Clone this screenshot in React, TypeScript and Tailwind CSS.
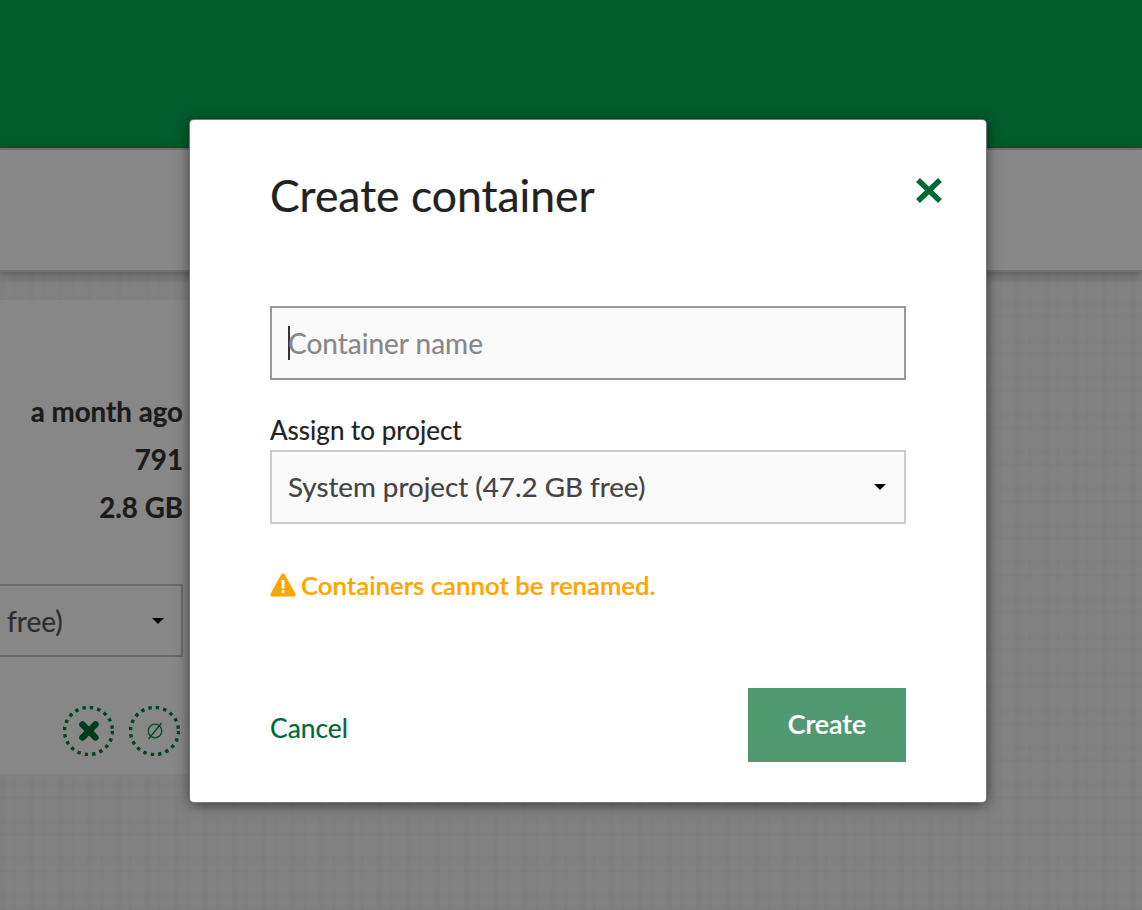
import { X } from "lucide-react";

function Dotted({ children }: { children: React.ReactNode }) {
  return (
    <div className="relative flex h-[50px] w-[51px] items-center justify-center">
      <svg width="51" height="50" viewBox="0 0 51 50" className="absolute inset-0" aria-hidden="true">
        <ellipse cx="25.500" cy="25" rx="24" ry="23.500" fill="none" stroke="#008040" strokeWidth="3.400" strokeDasharray="3.400 4.100" />
      </svg>
      {children}
    </div>
  );
}

function Background() {
  return (
    <div className="flex min-h-[910px] flex-col bg-[#f4f4f4] bg-[repeating-linear-gradient(90deg,rgba(0,0,0,0.014)_0_5px,transparent_5px_13px,rgba(0,0,0,0.01)_13px_16px,transparent_16px_29px),repeating-linear-gradient(0deg,rgba(0,0,0,0.014)_0_3px,transparent_3px_11px,rgba(0,0,0,0.01)_11px_17px,transparent_17px_37px)] font-['Lato',sans-serif] text-[#333]">
      <div className="h-[148px] bg-[#00ac55]" />
      <div className="h-[124px] border-y-2 border-[#d2d2d2] bg-white shadow-[0_3px_10px_rgba(0,0,0,0.3)]" />
      <div className="mt-[28px] w-[400px] bg-white pb-[18px] pr-[217px] pt-[88px]">
        <div className="flex flex-col items-end text-[27.700px] leading-[48px] font-bold">
          <span className="whitespace-nowrap">a month ago</span>
          <span>791</span>
          <span>2.8 GB</span>
        </div>
        <div className="ml-[-10px] mt-[52px] flex h-[73px] items-center justify-between border-2 border-[#c8c8c8] pl-[15px] pr-[17px] text-[28px] text-[#555]">
          <span>free)</span>
          <span className="h-0 w-0 border-x-[6px] border-t-[6px] border-x-transparent border-t-black" />
        </div>
        <div className="mt-[49px] flex justify-end gap-[15px] pr-[3px]">
          <Dotted>
            <X size={26} strokeWidth={6} className="text-[#007038]" />
          </Dotted>
          <Dotted>
            <svg width="22" height="18" viewBox="0 0 22 18" fill="none" stroke="#008a45" strokeWidth="1.300" aria-hidden="true">
              <circle cx="11" cy="9" r="6.800" />
              <path d="M4.500 17 17.500 1" />
            </svg>
          </Dotted>
        </div>
      </div>
    </div>
  );
}

export default function App() {
  return (
    <div className="relative h-[910px] w-[1142px] overflow-hidden [-webkit-text-stroke:0.2px]">
      <Background />
      <div className="absolute inset-0 bg-black/[0.47]" />
      <div className="absolute left-[190px] top-[120px] h-[682px] w-[796px] rounded-[4px] bg-white pl-[80px] pr-[80px] pt-[47px] font-['Lato',sans-serif] shadow-[0_0_0_1px_#777,0_2px_14px_rgba(0,0,0,0.6)]">
        <svg width="28" height="27" viewBox="0 0 28 27" className="absolute right-[43px] top-[57px]" aria-hidden="true">
          <path d="M3 3 25 24M25 3 3 24" fill="none" stroke="#006837" strokeWidth="5.500" />
        </svg>
        <h1 className="text-[44.500px] leading-[56px] font-normal text-[#222]">Create container</h1>
        <div className="mt-[83px] flex h-[74px] items-center border-2 border-[#999] bg-[#fafafa] pl-[16px] text-[28px] text-[#888]">
          <span className="mr-[-2px] h-[34px] w-[2px] bg-[#333]" />
          Container name
        </div>
        <label className="mt-[30px] block text-[26px] leading-[40px] text-[#222]">Assign to project</label>
        <div className="flex h-[74px] items-center justify-between border-2 border-[#ccc] bg-[#fafafa] pl-[16px] pr-[18px] text-[27.750px] text-[#444]">
          <span>System project (47.2 GB free)</span>
          <span className="h-0 w-0 border-x-[6px] border-t-[6px] border-x-transparent border-t-black" />
        </div>
        <div className="mt-[42px] flex items-center gap-[5px] text-[25.750px] font-semibold text-[#ffa500]">
          <svg width="26" height="24" viewBox="0 0 26 24" aria-hidden="true">
            <path d="M13 0.5c.8 0 1.4.4 1.8 1.1l10.600 19.200c.7 1.300-.2 2.700-1.700 2.700H2.300c-1.500 0-2.400-1.400-1.700-2.700L11.200 1.600C11.600 .9 12.200 .5 13 .5z" fill="#ffa500" />
            <rect x="11.500" y="7" width="3" height="8.500" fill="#fff" />
            <rect x="11.500" y="17" width="3" height="3" fill="#fff" />
          </svg>
          <span>Containers cannot be renamed.</span>
        </div>
        <div className="mt-[83px] flex items-center justify-between">
          <a className="mt-[8px] text-[26.400px] text-[#006837]">Cancel</a>
          <button className="flex h-[74px] w-[158px] items-center justify-center bg-[#4f9870] pb-[2px] text-[26.800px] font-semibold text-white">
            Create
          </button>
        </div>
      </div>
    </div>
  );
}
